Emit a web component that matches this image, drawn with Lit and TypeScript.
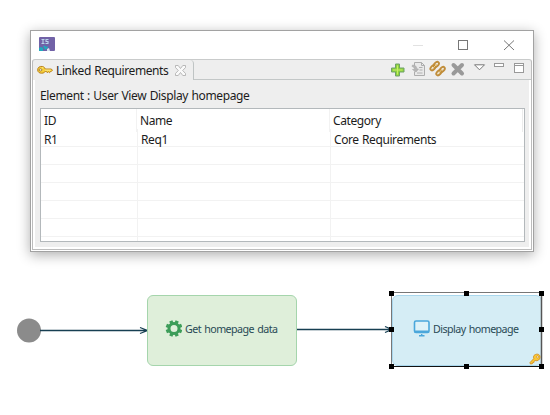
import { LitElement, html, css, svg } from "lit";
import { customElement } from "lit/decorators.js";

const keyIcon = svg`
  <path d="M5 3.200C2.500 2.700.6 4.200.6 6.300c0 2.300 1.900 3.300 3.800 3.200 1.700 0 2.700-.7 3.300-1.700h1.100l.8 1.200 1-.9 1.200 1 .9-1.300h.8l1-1-1-1.200H7.700C7.300 4.300 6.400 3.400 5 3.200Z"
    fill="#f6cf3a" stroke="#b67c17" stroke-width=".9"/>
  <ellipse cx="3.300" cy="6.400" rx="1.300" ry="1" fill="#fff" stroke="#8c5b10" stroke-width=".7"/>
  <path d="M4.500 4.500h1.500M7.500 6.600h5.500" stroke="#fff3a0" stroke-width=".8"/>`;

@customElement("app-root")
export class AppRoot extends LitElement {
  static styles = css`
    :host { display: block; position: relative; width: 550px; height: 415px; overflow: hidden;
      background: #fff; color: #1c1c1c; font: 12px "Noto Sans", "Open Sans", sans-serif;
      letter-spacing: -.41px; word-spacing: .6px; }
    * { box-sizing: border-box; }
    svg { display: block; flex: none; }
    .window { position: absolute; left: 30px; top: 30px; width: 504px; height: 222px;
      border: 1px solid #a2a2a2; background: #fff; display: flex; flex-direction: column;
      box-shadow: 0 3px 12px rgba(0,0,0,.32); }
    .titlebar { height: 28px; flex: none; display: flex; align-items: center; justify-content: space-between;
      padding: 0 18px 0 8px; }
    .logo { margin-bottom: 2px; }
    .view { flex: 1; margin: 0 1px 1px; border: 1px solid #bcbcbc; border-top-color: #c9cbcb;
      background: #eee; display: flex; flex-direction: column; border-radius: 3px 3px 0 0; }
    .tabs { height: 20px; flex: none; display: flex; }
    .tab { width: 161px; flex: none; border-right: 1px solid #bfc4c4; border-radius: 0 4px 0 0; display: flex; align-items: center; padding-left: 4px; }
    .label { width: 122px; flex: none; padding-left: 3px; white-space: nowrap; line-height: 18px; margin-top: 2px; }
    .tools { flex: 1; border-bottom: 1px solid #c3c7c7; display: flex; justify-content: flex-end; }
    .body { flex: 1; border: solid #fff; border-width: 0 2px 2px; padding: 7px 5px 0 5px; }
    .caption { line-height: 18px; height: 21px; white-space: nowrap; letter-spacing: -.36px; }
    .table { width: 485px; height: 134px; border: 1px solid #b3b8bb; background: #fff; overflow: hidden; }
    .row { display: grid; grid-template-columns: 97px 193px 1fr; height: 18px; border-bottom: 1px solid #f2f2f2; line-height: 21px; }
    .row > div { border-right: 1px solid #f2f2f2; padding-left: 3px; white-space: nowrap; }
    .row > div:last-child { border: 0; }
    .header { height: 20px; grid-template-columns: 96px 193px 193px; border: 0; line-height: 23px; }
    .header > div:last-child { border-right: 1px solid #ececec; }
    .wires { position: absolute; left: 0; top: 280px; }
    .node { position: absolute; top: 295px; width: 150px; height: 71px; border: 1.5px solid #a5d5ac;
      border-radius: 6px; background: #dfefda; display: flex; align-items: center; padding: 0 0 4px 17px;
      font-size: 10.7px; letter-spacing: -.56px; word-spacing: 1px; color: #294a55; white-space: nowrap; }
    .node span { margin: 1px 0 0 3px; }
    .task { left: 147px; }
    .page { left: 392px; background: #d5edf5; border-color: #a9d7ed; padding-left: 20px; }
    .select { position: absolute; left: 388px; top: 289px; }
  `;

  row(cells: string[], header = false) {
    return html`<div class=${header ? "row header" : "row"}>${cells.map((c) => html`<div>${c}</div>`)}</div>`;
  }

  render() {
    return html`
      <section class="window">
        <div class="titlebar">
          <svg class="logo" width="16" height="14" viewBox="0 0 16 14">
            <rect width="16" height="14" rx="1" fill="#7162a7"/>
            <path d="M2.500 2.500h3M4 2.500v4M2.500 6.500h3M9.500 2.500H7v2h2v2H6.500" fill="none" stroke="#b9d3ea" stroke-width="1.100"/>
            <path d="M0 11l2-1 2 1v3H0ZM4 9l2-.5 1 1.500 1.500-1L9 11l-3 2Z" fill="#22a8bd"/>
            <path d="M8 12l2-1 1 3H8Z" fill="#d8e5f2"/>
          </svg>
          <svg width="102" height="12" viewBox="0 0 102 12">
            <path d="M0 6.500h10" stroke="#e2e2e2"/>
            <rect x="45.500" y="1.500" width="9" height="9" fill="none" stroke="#777"/>
            <path d="M91 1.500l10 9.500M101 1.500L91 11" stroke="#777" fill="none"/>
          </svg>
        </div>
        <div class="view">
          <div class="tabs">
            <div class="tab">
              <svg width="16" height="14" viewBox="0 0 15 13">${keyIcon}</svg>
              <span class="label">Linked Requirements</span>
              <svg width="11" height="11" viewBox="0 0 11 11"><path d="M.5.5h2.700l2.300 3 2.300-3h2.700v2L7.700 5.500l2.800 3v2H7.800l-2.300-3-2.300 3H.5v-2l2.800-3L.5 2.500Z" fill="#fafafa" stroke="#aaa" stroke-width=".8"/></svg>
            </div>
            <div class="tools">
              <svg width="147" height="19" viewBox="384 60 147 19">
                <path d="M395.500 64h4v4h4.500v4h-4.500v4h-4v-4h-4v-4h4Z" fill="#8ed33c" stroke="#6fa06a"/>
                <path d="M397.500 65.500v9M393 70h9.500" stroke="#c6ed68"/>
                <path d="M414.500 62.500h7l3 3v10h-10v-4M414.500 67v-4.500M421.500 62.500v3h3" fill="#e9e9e9" stroke="#adadad"/>
                <path d="M412.500 65c3 0 4 1.500 4.500 4h1.500l-2.500 3-3.500-2.500h2c-.3-2-1-2.800-2.500-3Z" fill="#b5b5b5" stroke="#aaa" stroke-width=".6"/>
                <path d="M419 67.500h3.500M419.500 70h3M417 73h5.500" stroke="#b0b0b0"/>
                <g fill="none" stroke="#c08d3a" stroke-width="1.900">
                  <ellipse cx="433" cy="67.700" rx="1.900" ry="3.100" transform="rotate(45 433 67.700)"/>
                  <ellipse cx="436.300" cy="64.500" rx="1.900" ry="3.100" transform="rotate(45 436.300 64.500)"/>
                  <ellipse cx="438.900" cy="72.700" rx="1.900" ry="3.100" transform="rotate(45 438.900 72.700)"/>
                  <ellipse cx="442.200" cy="69.500" rx="1.900" ry="3.100" transform="rotate(45 442.200 69.500)"/>
                </g>
                <path d="M432.500 68.500l4.500-4.500M438 73.500l4.500-4.500" stroke="#efd089"/>
                <path d="M453.500 65l8.500 8.500M462 65l-8.500 8.500" stroke="#999" stroke-width="4" stroke-linecap="round"/>
                <path d="M474.500 64.800h10l-5 5Z" fill="#fff" stroke="#777"/>
                <rect x="494.500" y="63.500" width="9" height="3" fill="#fff" stroke="#999"/>
                <rect x="514.500" y="63.500" width="9" height="9" fill="#fff" stroke="#999"/>
                <path d="M514 65.500h10" stroke="#999"/>
              </svg>
            </div>
          </div>
          <div class="body">
            <div class="caption">Element : User View Display homepage</div>
            <div class="table">
              ${this.row(["ID", "Name", "Category"], true)}
              ${this.row(["R1", "Req1", "Core Requirements"])}
              ${[1, 2, 3, 4, 5, 6].map(() => this.row(["", "", ""]))}
            </div>
          </div>
        </div>
      </section>

      <svg class="wires" width="400" height="100" viewBox="0 280 400 100">
        <circle cx="29" cy="330.500" r="12" fill="#8b8b8b"/>
        <g fill="none" stroke="#173f52" stroke-width="1.300">
          <path d="M40 330.500h107M140 327.500l7.500 3-7.500 3"/>
          <path d="M296 329.500h96M385 326.500l7 3-7 3"/>
        </g>
      </svg>
      <div class="node task">
        <svg width="17" height="17" viewBox="-9 -8.500 17 17">
          <circle r="5" fill="none" stroke="#3d9d59" stroke-width="3"/>
          ${[22.5, 67.5, 112.5, 157.5, 202.5, 247.5, 292.5, 337.5].map((a) => svg`<rect x="-1.700" y="-8.300" width="3.400" height="3.500" fill="#3d9d59" transform="rotate(${a})"/>`)}
        </svg>
        <span>Get homepage data</span>
      </div>
      <div class="node page">
        <svg width="17" height="17" viewBox="0 0 17 17">
          <rect x="1.500" y="1" width="14.500" height="11.500" rx="1.500" fill="#def2f8" stroke="#4aa7db" stroke-width="1.600"/>
          <path d="M1.500 11.500H16" stroke="#4aa7db" stroke-width="2"/>
          <path d="M6 15.700h5.500M8.700 14v2" stroke="#4aa7db" stroke-width="1.400"/>
        </svg>
        <span>Display homepage</span>
      </div>
      <svg class="select" width="158" height="82" viewBox="388 289 158 82">
        <path d="M391.500 366V292.500H542" fill="none" stroke="#777"/>
        <path d="M541.500 293v73.500" stroke="#555" stroke-width="1.500"/>
        <path d="M391 366.500h151" stroke="#111"/>
        <path d="M534 355.500c2-2 5-1.600 5.800.2.900 2-.5 4.700-2.700 5-.9.200-1.500 0-2-.3l-1 .8-.2 1.300-1.300.1-.2 1.100-2 .3-.4-1.400 3.800-4c-.5-1-.4-2.300.2-3.100Z" fill="#fbc735" stroke="#cf8f22" stroke-width=".9"/>
        <circle cx="537.500" cy="356.900" r="1" fill="#fff" stroke="#b77b1c" stroke-width=".6"/>
        ${[[391.5, 293], [466.5, 293], [541.5, 293], [391.5, 329], [541.5, 329], [391.5, 366], [466.5, 366], [541.5, 366]].map(([x, y]) => svg`<rect x=${x - 2.5} y=${y - 2} width="5" height="5" fill="#000"/>`)}
      </svg>`;
  }
}
